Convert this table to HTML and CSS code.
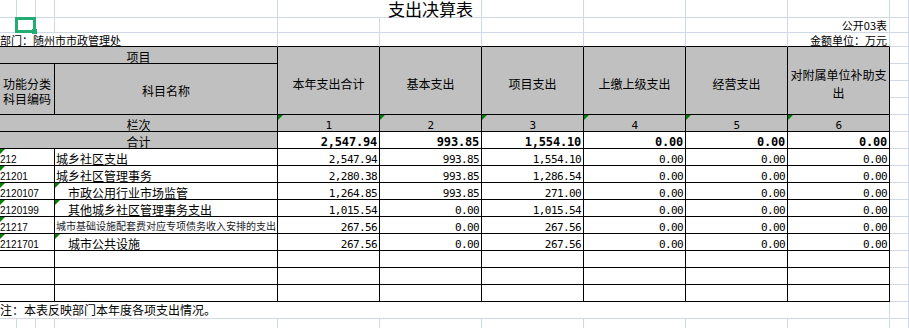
FILE: index.html
```html
<!DOCTYPE html>
<html lang="zh-CN">
<head>
<meta charset="utf-8">
<title>支出决算表</title>
<link rel="stylesheet" href="styles.css">
</head>
<body>
<div class="sheet">
  <!-- row 1 -->
  <div class="c"></div><div class="c"></div><div class="c"></div><div class="c"></div>
  <div class="c nor"></div>
  <div class="c title">支出决算表</div>
  <div class="c"></div><div class="c"></div><div class="c"></div><div class="c"></div><div class="c"></div>
  <!-- row 2 -->
  <div class="c"></div><div class="c sel"></div><div class="c"></div><div class="c"></div>
  <div class="c"></div><div class="c"></div><div class="c"></div><div class="c"></div><div class="c"></div>
  <div class="c meta right pb1">公开03表</div>
  <div class="c"></div>
  <!-- row 3 -->
  <div class="c tb s4 meta">部门：随州市市政管理处</div>
  <div class="c tb"></div><div class="c tb"></div><div class="c tb"></div><div class="c tb"></div><div class="c tb"></div>
  <div class="c tb meta right">金额单位：万元</div>
  <div class="c"></div>
  <!-- row 4: header -->
  <div class="c t g s4 ctr">项目</div>
  <div class="c t g r4 ctr mid"><span>本年支出合计</span></div>
  <div class="c t g r4 ctr mid"><span>基本支出</span></div>
  <div class="c t g r4 ctr mid"><span>项目支出</span></div>
  <div class="c t g r4 ctr mid"><span>上缴上级支出</span></div>
  <div class="c t g r4 ctr mid"><span>经营支出</span></div>
  <div class="c t g r4 ctr mid wrap2"><span>对附属单位补助支出</span></div>
  <div class="c"></div>
  <!-- row 5-7 -->
  <div class="c t g s3 r3 ctr mid2 wrap1"><span>功能分类科目编码</span></div>
  <div class="c t g r3 ctr mid2"><span>科目名称</span></div>
  <div class="c"></div>
  <div class="c"></div>
  <div class="c"></div>
  <!-- row 8: 栏次 -->
  <div class="c t g s4 ctr">栏次</div>
  <div class="c t g ctr num tri">1</div>
  <div class="c t g ctr num tri">2</div>
  <div class="c t g ctr num tri">3</div>
  <div class="c t g ctr num tri">4</div>
  <div class="c t g ctr num tri">5</div>
  <div class="c t g ctr num tri">6</div>
  <div class="c"></div>
  <!-- row 9: 合计 -->
  <div class="c t g s4 ctr">合计</div>
  <div class="c t num bold">2,547.94</div>
  <div class="c t num bold">993.85</div>
  <div class="c t num bold">1,554.10</div>
  <div class="c t num bold">0.00</div>
  <div class="c t num bold">0.00</div>
  <div class="c t num bold">0.00</div>
  <div class="c"></div>
  <!-- data rows -->
  <div class="c t s3 code tri">212</div>
  <div class="c t name">城乡社区支出</div>
  <div class="c t num">2,547.94</div><div class="c t num">993.85</div><div class="c t num">1,554.10</div>
  <div class="c t num">0.00</div><div class="c t num">0.00</div><div class="c t num">0.00</div>
  <div class="c"></div>

  <div class="c t s3 code tri">21201</div>
  <div class="c t name">城乡社区管理事务</div>
  <div class="c t num">2,280.38</div><div class="c t num">993.85</div><div class="c t num">1,286.54</div>
  <div class="c t num">0.00</div><div class="c t num">0.00</div><div class="c t num">0.00</div>
  <div class="c"></div>

  <div class="c t s3 code tri">2120107</div>
  <div class="c t name ind tri">市政公用行业市场监管</div>
  <div class="c t num">1,264.85</div><div class="c t num">993.85</div><div class="c t num">271.00</div>
  <div class="c t num">0.00</div><div class="c t num">0.00</div><div class="c t num">0.00</div>
  <div class="c"></div>

  <div class="c t s3 code tri">2120199</div>
  <div class="c t name ind tri">其他城乡社区管理事务支出</div>
  <div class="c t num">1,015.54</div><div class="c t num">0.00</div><div class="c t num">1,015.54</div>
  <div class="c t num">0.00</div><div class="c t num">0.00</div><div class="c t num">0.00</div>
  <div class="c"></div>

  <div class="c t s3 code tri">21217</div>
  <div class="c t name small">城市基础设施配套费对应专项债务收入安排的支出</div>
  <div class="c t num">267.56</div><div class="c t num">0.00</div><div class="c t num">267.56</div>
  <div class="c t num">0.00</div><div class="c t num">0.00</div><div class="c t num">0.00</div>
  <div class="c"></div>

  <div class="c t s3 code tri">2121701</div>
  <div class="c t name ind tri">城市公共设施</div>
  <div class="c t num">267.56</div><div class="c t num">0.00</div><div class="c t num">267.56</div>
  <div class="c t num">0.00</div><div class="c t num">0.00</div><div class="c t num">0.00</div>
  <div class="c"></div>

  <!-- empty rows -->
  <div class="c t s3"></div><div class="c t"></div>
  <div class="c t"></div><div class="c t"></div><div class="c t"></div><div class="c t"></div><div class="c t"></div><div class="c t"></div>
  <div class="c"></div>
  <div class="c t s3"></div><div class="c t"></div>
  <div class="c t"></div><div class="c t"></div><div class="c t"></div><div class="c t"></div><div class="c t"></div><div class="c t"></div>
  <div class="c"></div>
  <div class="c t s3"></div><div class="c t"></div>
  <div class="c t"></div><div class="c t"></div><div class="c t"></div><div class="c t"></div><div class="c t"></div><div class="c t"></div>
  <div class="c"></div>

  <!-- footnote -->
  <div class="c s10 note">注：本表反映部门本年度各项支出情况。</div>
  <div class="c"></div>

  <!-- last row -->
  <div class="c"></div><div class="c"></div><div class="c"></div><div class="c"></div>
  <div class="c"></div><div class="c"></div><div class="c"></div><div class="c"></div><div class="c"></div><div class="c"></div><div class="c"></div>
</div>
</body>
</html>
```
FILE: styles.css
```css
*, *::before, *::after {
  box-sizing: border-box;
}

body {
  margin: 0;
  background: #fff;
  color: #000;
  font-family: "Noto Sans CJK SC", "Noto Sans", sans-serif;
  font-size: 12px;
  overflow: hidden;
}

.sheet {
  display: grid;
  grid-template-columns: 17px 19px 19px 223px repeat(6, 102px) 1fr;
  grid-template-rows: 18px 15px 14px repeat(17, 17px);
  width: 909px;
}

.c {
  position: relative;
  display: flex;
  align-items: flex-end;
  min-width: 0;
  border-right: 1px solid #d0d7e5;
  border-bottom: 1px solid #d0d7e5;
  line-height: 12px;
  white-space: nowrap;
}

.t {
  border-right-color: #000;
  border-bottom-color: #000;
}

.tb {
  border-bottom-color: #000;
}

.nor {
  border-right-color: transparent;
}

.g {
  background: #c0c0c0;
}

.s3 { grid-column: span 3; }
.s4 { grid-column: span 4; }
.s10 { grid-column: span 10; }
.r3 { grid-row: span 3; }
.r4 { grid-row: span 4; }

.ctr {
  justify-content: center;
  text-align: center;
}

.right {
  justify-content: flex-end;
  padding-right: 2px;
}

.mid {
  align-items: center;
  padding-top: 6px;
  white-space: normal;
}

.mid2 {
  align-items: center;
  padding-top: 3px;
  white-space: normal;
}

.wrap1 { line-height: 15px; }
.wrap2 { line-height: 18px; }

.title {
  font-size: 17px;
  line-height: 17px;
  align-items: flex-start;
  justify-content: center;
  overflow: visible;
}

.meta {
  font-size: 11px;
  line-height: 11px;
}

.pb1 { padding-bottom: 1px; }

.num {
  font-family: "DejaVu Sans Mono", "Liberation Mono", monospace;
  font-size: 11px;
  letter-spacing: -0.6px;
  line-height: 10px;
  justify-content: flex-end;
  padding-right: 2px;
}

.num.ctr {
  justify-content: center;
  padding-right: 0;
}

.bold {
  font-weight: bold;
  font-size: 12px;
  letter-spacing: -0.2px;
  line-height: 12px;
}

.code {
  font-family: "Liberation Sans", Arial, sans-serif;
  font-size: 10px;
  line-height: 10px;
}

.name { padding-left: 1px; }
.ind { padding-left: 13px; }

.small {
  font-size: 10px;
  line-height: 10px;
  padding-bottom: 2px;
  color: #1a1a2a;
}

.note { padding-bottom: 2px; }

.tri::before {
  content: "";
  position: absolute;
  left: 0;
  top: 0;
  border-top: 5px solid #008000;
  border-right: 5px solid transparent;
}

.sel {
  z-index: 2;
}

.sel::before {
  content: "";
  position: absolute;
  left: -2px;
  top: -1px;
  width: 21px;
  height: 16px;
  border: 3px solid #22ae73;
}

.sel::after {
  content: "";
  position: absolute;
  left: 15px;
  top: 11px;
  width: 5px;
  height: 5px;
  background: #22ae73;
}
```
